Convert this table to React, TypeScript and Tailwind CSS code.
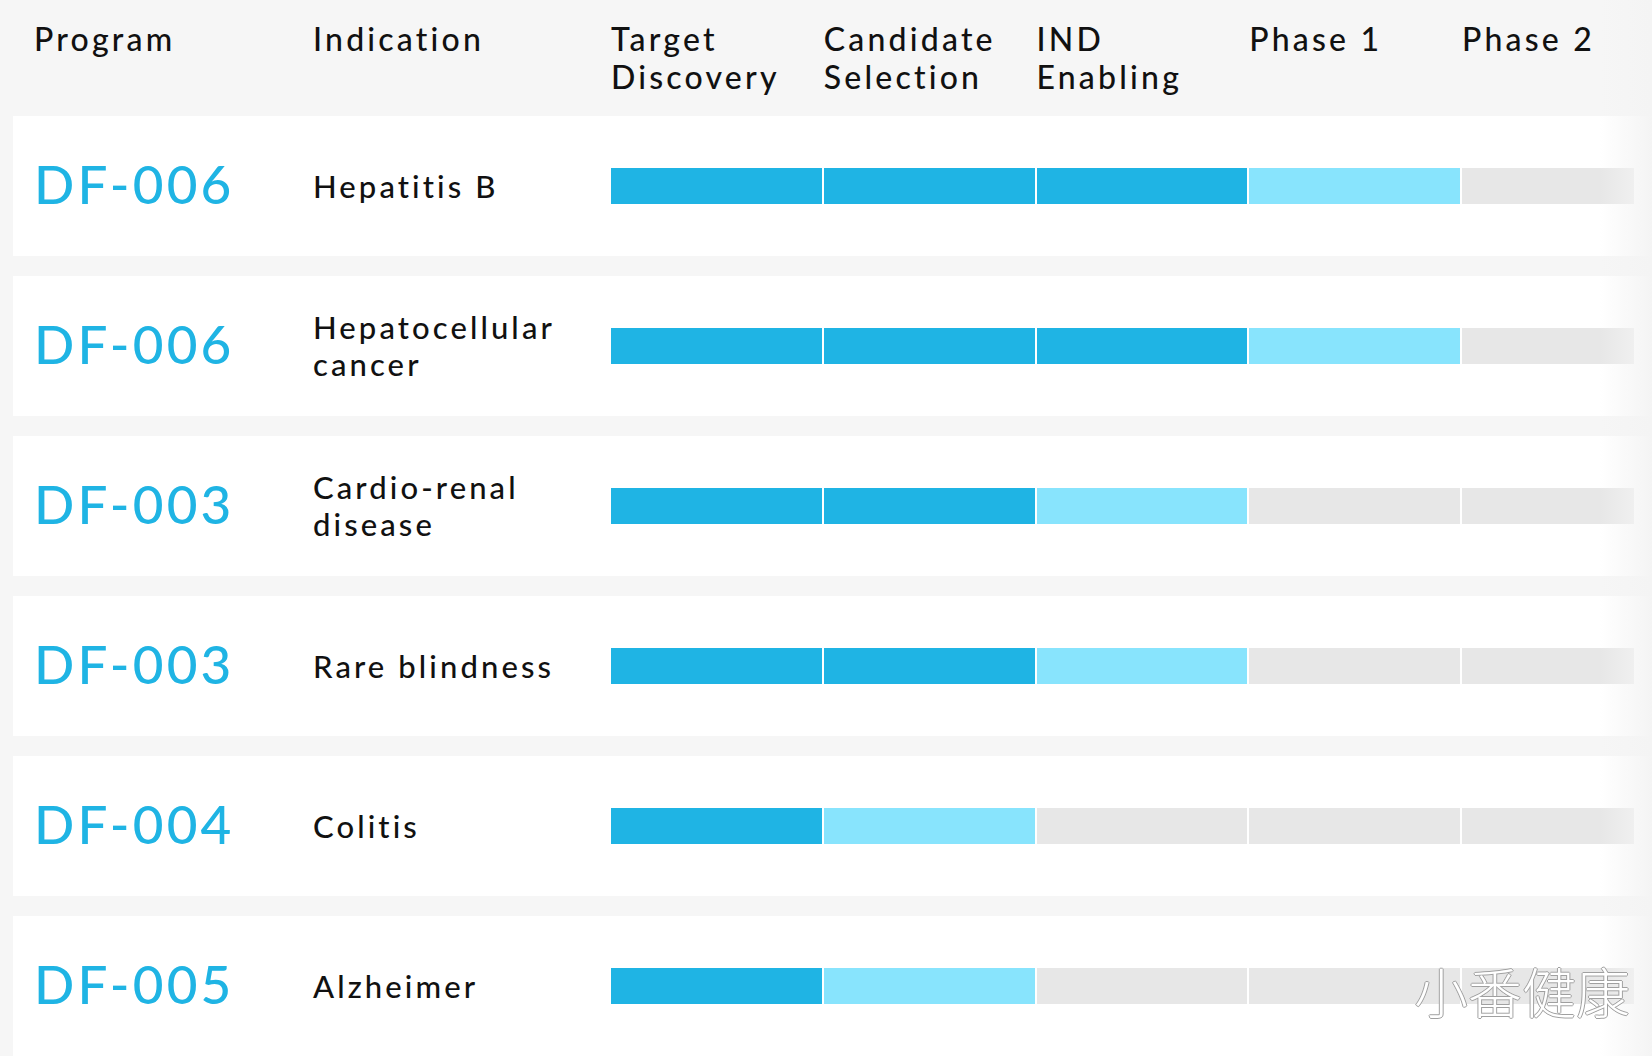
import React from "react";

type Row = { id: string; ind: string[]; done: number; active: number };

const rows: Row[] = [
  { id: "DF-006", ind: ["Hepatitis B"], done: 3, active: 1 },
  { id: "DF-006", ind: ["Hepatocellular", "cancer"], done: 3, active: 1 },
  { id: "DF-003", ind: ["Cardio-renal", "disease"], done: 2, active: 1 },
  { id: "DF-003", ind: ["Rare blindness"], done: 2, active: 1 },
  { id: "DF-004", ind: ["Colitis"], done: 1, active: 1 },
  { id: "DF-005", ind: ["Alzheimer"], done: 1, active: 1 },
];

const headers: string[][] = [
  ["Target", "Discovery"],
  ["Candidate", "Selection"],
  ["IND", "Enabling"],
  ["Phase 1"],
  ["Phase 2"],
];

function segClass(i: number, r: Row) {
  if (i < r.done) return "bg-[#1fb4e4]";
  if (i < r.done + r.active) return "bg-[#88e4fd]";
  return "bg-[#e7e7e7]";
}

export default function App() {
  return (
    <div
      className="relative w-[1652px] h-[1056px] overflow-hidden bg-[#f6f6f6] text-[#111]"
      style={{ fontFamily: "Lato, 'Open Sans', sans-serif" }}
    >
      {/* header */}
      <div className="h-[116px] pl-[34px] pt-[20px] grid grid-cols-[279px_298px_212.75px_212.75px_212.75px_212.75px_1fr] text-[32px] leading-[38px] tracking-[0.1em] font-medium">
        <div>Program</div>
        <div>Indication</div>
        {headers.map((h, i) => (
          <div key={i}>
            {h.map((l, j) => (
              <div key={j}>{l}</div>
            ))}
          </div>
        ))}
      </div>

      {/* rows */}
      <div className="flex flex-col gap-[20px] pl-[13px]">
        {rows.map((r, idx) => (
          <div
            key={idx}
            className="h-[140px] bg-white pl-[21px] grid grid-cols-[279px_298px_1fr] items-center"
          >
            <div className="text-[53px] leading-none tracking-[0.06em] text-[#1fb4e4] font-medium -translate-y-[3px]">
              {r.id}
            </div>
            <div className="text-[31px] leading-[37px] tracking-[0.1em] font-medium">
              {r.ind.map((l, j) => (
                <div key={j}>{l}</div>
              ))}
            </div>
            <div className="grid grid-cols-[repeat(4,210.75px)_172px] gap-x-[2px] h-[36px]">
              {[0, 1, 2, 3, 4].map((i) => (
                <div key={i} className={segClass(i, r)} />
              ))}
            </div>
          </div>
        ))}
      </div>

      {/* right edge fade */}
      <div className="absolute top-0 right-0 w-[52px] h-full bg-gradient-to-r from-[#f6f6f600] to-[#f4f4f4]" />

      {/* watermark */}
      <div
        className="absolute left-[1414px] top-[964px] text-[54px] leading-none text-white font-light"
        style={{
          fontFamily: "'Noto Sans CJK SC', sans-serif",
          textShadow:
            "1px 0 0 #a0a0a0, -1px 0 0 #a0a0a0, 0 1px 0 #a0a0a0, 0 -1px 0 #a0a0a0",
        }}
      >
        小番健康
      </div>
    </div>
  );
}
